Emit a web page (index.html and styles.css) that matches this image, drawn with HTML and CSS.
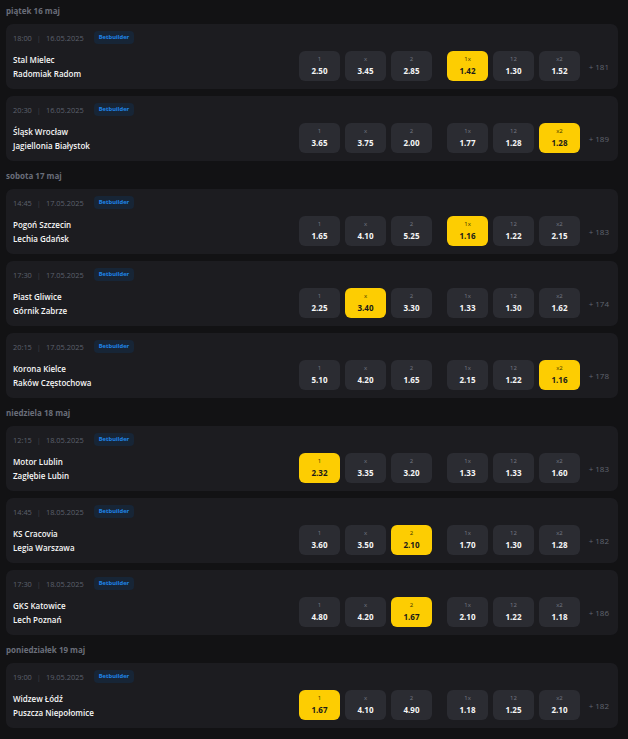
FILE: index.html
```html
<!DOCTYPE html>
<html lang="pl">
<head>
<meta charset="utf-8">
<title>Mecze</title>
<link rel="stylesheet" href="styles.css">
</head>
<body>
<div class="page">

  <section class="group">
    <h2 class="day-title">piątek 16 maj</h2>
    <div class="card">
      <div class="meta"><span>18:00</span><span class="sep">|</span><span>16.05.2025</span><span class="badge">Betbuilder</span></div>
      <div class="body">
        <div class="teams"><div>Stal Mielec</div><div>Radomiak Radom</div></div>
        <div class="odds">
          <div class="odd-group">
            <div class="odd"><span class="lbl">1</span><span class="val">2.50</span></div>
            <div class="odd"><span class="lbl">x</span><span class="val">3.45</span></div>
            <div class="odd"><span class="lbl">2</span><span class="val">2.85</span></div>
          </div>
          <div class="odd-group">
            <div class="odd active"><span class="lbl">1x</span><span class="val">1.42</span></div>
            <div class="odd"><span class="lbl">12</span><span class="val">1.30</span></div>
            <div class="odd"><span class="lbl">x2</span><span class="val">1.52</span></div>
          </div>
        </div>
        <div class="more">+ 181</div>
      </div>
    </div>
    <div class="card">
      <div class="meta"><span>20:30</span><span class="sep">|</span><span>16.05.2025</span><span class="badge">Betbuilder</span></div>
      <div class="body">
        <div class="teams"><div>Śląsk Wrocław</div><div>Jagiellonia Białystok</div></div>
        <div class="odds">
          <div class="odd-group">
            <div class="odd"><span class="lbl">1</span><span class="val">3.65</span></div>
            <div class="odd"><span class="lbl">x</span><span class="val">3.75</span></div>
            <div class="odd"><span class="lbl">2</span><span class="val">2.00</span></div>
          </div>
          <div class="odd-group">
            <div class="odd"><span class="lbl">1x</span><span class="val">1.77</span></div>
            <div class="odd"><span class="lbl">12</span><span class="val">1.28</span></div>
            <div class="odd active"><span class="lbl">x2</span><span class="val">1.28</span></div>
          </div>
        </div>
        <div class="more">+ 189</div>
      </div>
    </div>
  </section>

  <section class="group">
    <h2 class="day-title">sobota 17 maj</h2>
    <div class="card">
      <div class="meta"><span>14:45</span><span class="sep">|</span><span>17.05.2025</span><span class="badge">Betbuilder</span></div>
      <div class="body">
        <div class="teams"><div>Pogoń Szczecin</div><div>Lechia Gdańsk</div></div>
        <div class="odds">
          <div class="odd-group">
            <div class="odd"><span class="lbl">1</span><span class="val">1.65</span></div>
            <div class="odd"><span class="lbl">x</span><span class="val">4.10</span></div>
            <div class="odd"><span class="lbl">2</span><span class="val">5.25</span></div>
          </div>
          <div class="odd-group">
            <div class="odd active"><span class="lbl">1x</span><span class="val">1.16</span></div>
            <div class="odd"><span class="lbl">12</span><span class="val">1.22</span></div>
            <div class="odd"><span class="lbl">x2</span><span class="val">2.15</span></div>
          </div>
        </div>
        <div class="more">+ 183</div>
      </div>
    </div>
    <div class="card">
      <div class="meta"><span>17:30</span><span class="sep">|</span><span>17.05.2025</span><span class="badge">Betbuilder</span></div>
      <div class="body">
        <div class="teams"><div>Piast Gliwice</div><div>Górnik Zabrze</div></div>
        <div class="odds">
          <div class="odd-group">
            <div class="odd"><span class="lbl">1</span><span class="val">2.25</span></div>
            <div class="odd active"><span class="lbl">x</span><span class="val">3.40</span></div>
            <div class="odd"><span class="lbl">2</span><span class="val">3.30</span></div>
          </div>
          <div class="odd-group">
            <div class="odd"><span class="lbl">1x</span><span class="val">1.33</span></div>
            <div class="odd"><span class="lbl">12</span><span class="val">1.30</span></div>
            <div class="odd"><span class="lbl">x2</span><span class="val">1.62</span></div>
          </div>
        </div>
        <div class="more">+ 174</div>
      </div>
    </div>
    <div class="card">
      <div class="meta"><span>20:15</span><span class="sep">|</span><span>17.05.2025</span><span class="badge">Betbuilder</span></div>
      <div class="body">
        <div class="teams"><div>Korona Kielce</div><div>Raków Częstochowa</div></div>
        <div class="odds">
          <div class="odd-group">
            <div class="odd"><span class="lbl">1</span><span class="val">5.10</span></div>
            <div class="odd"><span class="lbl">x</span><span class="val">4.20</span></div>
            <div class="odd"><span class="lbl">2</span><span class="val">1.65</span></div>
          </div>
          <div class="odd-group">
            <div class="odd"><span class="lbl">1x</span><span class="val">2.15</span></div>
            <div class="odd"><span class="lbl">12</span><span class="val">1.22</span></div>
            <div class="odd active"><span class="lbl">x2</span><span class="val">1.16</span></div>
          </div>
        </div>
        <div class="more">+ 178</div>
      </div>
    </div>
  </section>

  <section class="group">
    <h2 class="day-title">niedziela 18 maj</h2>
    <div class="card">
      <div class="meta"><span>12:15</span><span class="sep">|</span><span>18.05.2025</span><span class="badge">Betbuilder</span></div>
      <div class="body">
        <div class="teams"><div>Motor Lublin</div><div>Zagłębie Lubin</div></div>
        <div class="odds">
          <div class="odd-group">
            <div class="odd active"><span class="lbl">1</span><span class="val">2.32</span></div>
            <div class="odd"><span class="lbl">x</span><span class="val">3.35</span></div>
            <div class="odd"><span class="lbl">2</span><span class="val">3.20</span></div>
          </div>
          <div class="odd-group">
            <div class="odd"><span class="lbl">1x</span><span class="val">1.33</span></div>
            <div class="odd"><span class="lbl">12</span><span class="val">1.33</span></div>
            <div class="odd"><span class="lbl">x2</span><span class="val">1.60</span></div>
          </div>
        </div>
        <div class="more">+ 183</div>
      </div>
    </div>
    <div class="card">
      <div class="meta"><span>14:45</span><span class="sep">|</span><span>18.05.2025</span><span class="badge">Betbuilder</span></div>
      <div class="body">
        <div class="teams"><div>KS Cracovia</div><div>Legia Warszawa</div></div>
        <div class="odds">
          <div class="odd-group">
            <div class="odd"><span class="lbl">1</span><span class="val">3.60</span></div>
            <div class="odd"><span class="lbl">x</span><span class="val">3.50</span></div>
            <div class="odd active"><span class="lbl">2</span><span class="val">2.10</span></div>
          </div>
          <div class="odd-group">
            <div class="odd"><span class="lbl">1x</span><span class="val">1.70</span></div>
            <div class="odd"><span class="lbl">12</span><span class="val">1.30</span></div>
            <div class="odd"><span class="lbl">x2</span><span class="val">1.28</span></div>
          </div>
        </div>
        <div class="more">+ 182</div>
      </div>
    </div>
    <div class="card">
      <div class="meta"><span>17:30</span><span class="sep">|</span><span>18.05.2025</span><span class="badge">Betbuilder</span></div>
      <div class="body">
        <div class="teams"><div>GKS Katowice</div><div>Lech Poznań</div></div>
        <div class="odds">
          <div class="odd-group">
            <div class="odd"><span class="lbl">1</span><span class="val">4.80</span></div>
            <div class="odd"><span class="lbl">x</span><span class="val">4.20</span></div>
            <div class="odd active"><span class="lbl">2</span><span class="val">1.67</span></div>
          </div>
          <div class="odd-group">
            <div class="odd"><span class="lbl">1x</span><span class="val">2.10</span></div>
            <div class="odd"><span class="lbl">12</span><span class="val">1.22</span></div>
            <div class="odd"><span class="lbl">x2</span><span class="val">1.18</span></div>
          </div>
        </div>
        <div class="more">+ 186</div>
      </div>
    </div>
  </section>

  <section class="group">
    <h2 class="day-title">poniedziałek 19 maj</h2>
    <div class="card">
      <div class="meta"><span>19:00</span><span class="sep">|</span><span>19.05.2025</span><span class="badge">Betbuilder</span></div>
      <div class="body">
        <div class="teams"><div>Widzew Łódź</div><div>Puszcza Niepołomice</div></div>
        <div class="odds">
          <div class="odd-group">
            <div class="odd active"><span class="lbl">1</span><span class="val">1.67</span></div>
            <div class="odd"><span class="lbl">x</span><span class="val">4.10</span></div>
            <div class="odd"><span class="lbl">2</span><span class="val">4.90</span></div>
          </div>
          <div class="odd-group">
            <div class="odd"><span class="lbl">1x</span><span class="val">1.18</span></div>
            <div class="odd"><span class="lbl">12</span><span class="val">1.25</span></div>
            <div class="odd"><span class="lbl">x2</span><span class="val">2.10</span></div>
          </div>
        </div>
        <div class="more">+ 182</div>
      </div>
    </div>
  </section>

</div>
</body>
</html>
```

FILE: styles.css
```css
html, body {
  margin: 0;
  padding: 0;
  background: #121214;
}

body {
  font-family: "Open Sans", "Noto Sans", sans-serif;
  color: #f2f2f2;
}

.page {
  padding: 0 10px 0 6px;
}

.group {
  display: flex;
  flex-direction: column;
  gap: 7px;
}

.group + .group {
  margin-top: 4px;
}

.day-title {
  margin: 0 0 -7px 0;
  height: 24px;
  line-height: 22px;
  font-size: 8px;
  font-weight: 700;
  color: #6a6e7a;
}

.card {
  background: #1c1c20;
  border-radius: 7px;
  padding: 7px 9px 8px 7px;
  height: 65px;
  box-sizing: border-box;
}

.meta {
  display: flex;
  align-items: center;
  height: 13px;
  font-size: 7.4px;
  color: #5d616d;
}

.sep {
  margin: 0 5px;
  color: #3c3f48;
}

.badge {
  margin-left: 10px;
  height: 13px;
  line-height: 13px;
  padding: 0 5px;
  border-radius: 4px;
  background: #172536;
  color: #1f86ea;
  font-size: 5.8px;
  font-weight: 700;
}

.body {
  display: flex;
  align-items: center;
  margin-top: 7px;
  height: 30px;
}

.teams {
  flex: 1;
  font-size: 8px;
  font-weight: 600;
  line-height: 14px;
  color: #f6f6f6;
  padding-top: 2px;
}

.odds {
  display: flex;
  gap: 15px;
}

.odd-group {
  display: flex;
  gap: 5px;
}

.odd {
  width: 41px;
  height: 30px;
  border-radius: 6px;
  background: #2b2c32;
  display: flex;
  flex-direction: column;
  align-items: center;
  box-sizing: border-box;
  padding-top: 4px;
}

.lbl {
  font-size: 6px;
  line-height: 8px;
  color: #767a86;
}

.val {
  margin-top: 2px;
  font-size: 8px;
  line-height: 12px;
  font-weight: 700;
  color: #f6f6f6;
}

.odd.active {
  background: #fdcd02;
}

.odd.active .lbl {
  color: #3a3200;
}

.odd.active .val {
  color: #1a1a1a;
}

.more {
  width: 29px;
  text-align: right;
  font-size: 8px;
  color: #60646f;
}
```
